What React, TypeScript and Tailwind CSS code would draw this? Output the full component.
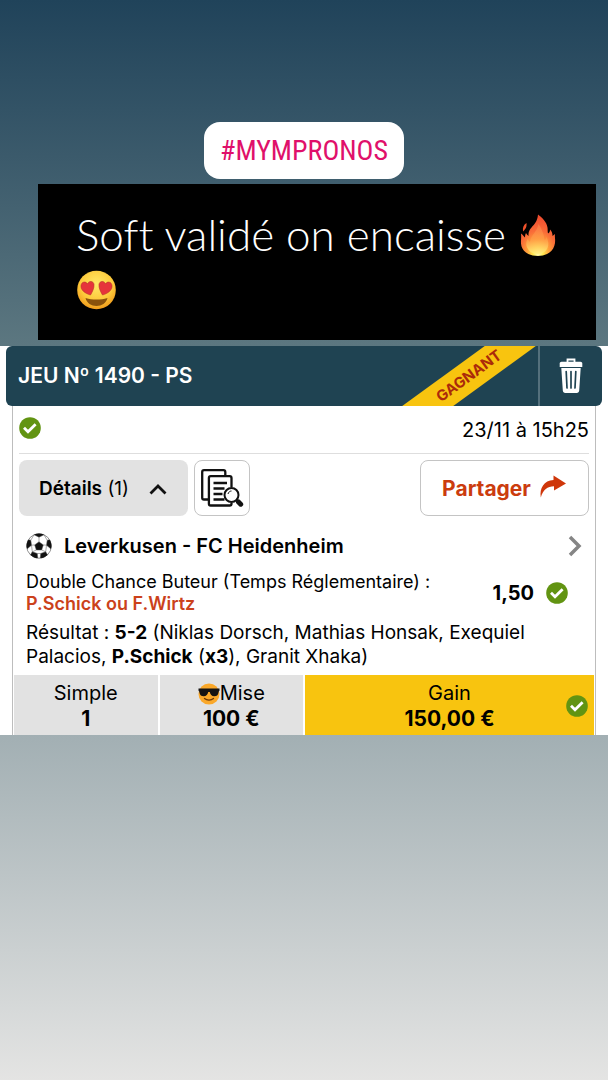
import React from 'react';
import clsx from 'clsx';

const CheckBadge = ({ className }: { className?: string }) => (
  <svg viewBox="0 0 22 22" className={clsx('h-[22px] w-[22px] shrink-0', className)} aria-hidden="true">
    <circle cx="11" cy="11" r="10.8" fill="#629412" />
    <path d="M5 10.800l4 4 7.600-7.600" fill="none" stroke="#fff" strokeWidth="2.800" />
  </svg>
);

const Fire = () => (
  <svg viewBox="0 0 36 44" className="ml-0.5 inline-block h-11 w-9 align-[-6px]" aria-hidden="true">
    <defs>
      <radialGradient id="flame" cx="0.5" cy="0.93" r="0.9">
        <stop offset="0" stopColor="#fffbc4" />
        <stop offset="0.16" stopColor="#ffe94f" />
        <stop offset="0.36" stopColor="#ffa03a" />
        <stop offset="0.6" stopColor="#f96c38" />
        <stop offset="1" stopColor="#ee4a2e" />
      </radialGradient>
      <linearGradient id="flameCore" x1="0" y1="0" x2="0" y2="1">
        <stop offset="0" stopColor="#ff8a50" stopOpacity="0.5" />
        <stop offset="0.5" stopColor="#ff9d48" stopOpacity="0.7" />
        <stop offset="1" stopColor="#fff07a" stopOpacity="0.9" />
      </linearGradient>
    </defs>
    <path
      d="M18 1.500c4 3 9 8 9.500 13 .3 2 0 4 .5 6 1.500-.8 2-2 2-4 2 2 2.500 4 2.500 6.500l2.500-2c-.5 3 .5 5 0 9C34 38 27 43 18 43 8 43 1.500 38 1 30.500.8 28 1.500 24 1 20.500c2 1 2.500 3 4 4 0-2 .3-3 1-4.500 1 1.500 1.300 2 2.500 3 0-4 .5-5.500 3-8.500 2.500-3 6-6 6.500-13z"
      fill="url(#flame)"
    />
    <path d="M6.500 10c-3 2-4 4.500-3.500 8.500 2-2 4-4 3.500-8.500z" fill="#f0522b" />
    <path
      d="M18.500 11c3 4 5 9 6 16 1-.5 1.500-1.500 2-3 2 4 2.500 8 1 11-2 4-5.500 6-9.500 6-5.500 0-10-3-11.500-8-.6-2.500 0-5 1-7 1 1 1.500 2 2.500 3 1-7 7-10 8.500-18z"
      fill="url(#flameCore)"
    />
  </svg>
);

const HeartEyes = () => (
  <svg viewBox="0 0 40 40" className="h-10 w-10" aria-hidden="true">
    <defs>
      <radialGradient id="face" cx="0.5" cy="0.35" r="0.65">
        <stop offset="0" stopColor="#ffe968" />
        <stop offset="0.65" stopColor="#fdc93a" />
        <stop offset="1" stopColor="#f09a1c" />
      </radialGradient>
    </defs>
    <circle cx="20.500" cy="20" r="19.300" fill="url(#face)" />
    <path d="M14.500 25C9 23.500 4.500 20 5 15.500c.5-4 5-4.500 6.500-1.500 1-3.500 6-3.500 6.500.5.300 3.500-1.500 7-3.500 10.500z" fill="#e6333b" stroke="#b83428" strokeWidth="0.600" />
    <path d="M26.500 25c5.500-1.500 10-5 9.500-9.500-.5-4-5-4.500-6.500-1.500-1-3.500-6-3.500-6.500.5-.3 3.500 1.500 7 3.500 10.500z" fill="#e6333b" stroke="#b83428" strokeWidth="0.600" />
    <path d="M9.500 28c7 2 15 2 22 0-1 5-6 8-11 8s-10-3-11-8z" fill="#8a520c" />
  </svg>
);

const CoolFace = () => (
  <svg viewBox="0 0 22 22" className="h-[22px] w-[22px]" aria-hidden="true">
    <circle cx="11" cy="11" r="10.500" fill="#faa82a" />
    <path d="M.5 5.500h21v2.300c-.7.300-.8.800-1 2-.4 2.400-1.800 3.500-4.200 3.500-2.700 0-4-1.600-4.500-4.200h-1.600c-.5 2.600-1.800 4.200-4.500 4.200-2.400 0-3.800-1.100-4.200-3.500-.2-1.200-.3-1.700-1-2z" fill="#151312" />
    <path d="M6.500 15.500c2.500 2.200 6.500 2.200 9 0" fill="none" stroke="#6f3906" strokeWidth="1.300" strokeLinecap="round" />
  </svg>
);

const Trash = () => (
  <svg viewBox="0 0 24 36" className="h-9 w-6" aria-hidden="true">
    <path d="M8.500 4V1.500h7V4" fill="none" stroke="#fff" strokeWidth="1.800" />
    <path d="M2.500 3.800h19c1 0 1.800.8 1.800 1.800V9H.7V5.600c0-1 .8-1.800 1.800-1.800z" fill="#fff" />
    <path d="M2.300 10h19.400l-1.500 22.500c-.1 1.500-1 2.500-2.500 2.500H6.300c-1.500 0-2.400-1-2.500-2.500z" fill="#fff" />
    <path d="M7.200 13.500l.8 16.500M12 13.500V30M16.800 13.500L16 30" stroke="#1f4352" strokeWidth="1.700" strokeLinecap="round" />
  </svg>
);

const DocSearch = () => (
  <svg viewBox="0 0 44 40" className="h-10 w-11" fill="none" stroke="#111" strokeWidth="2.300" aria-hidden="true">
    <path d="M8 31.500H4c-1.200 0-1.800-.6-1.800-1.800V4c0-1.200.6-1.800 1.800-1.800h19.500c1.200 0 1.800.6 1.800 1.800v3.500" />
    <path d="M31.500 19v-9c0-1.200-.6-1.800-1.800-1.800h-19c-1.200 0-1.800.6-1.800 1.800v25.700c0 1.200.6 1.800 1.800 1.800h19c1.200 0 1.800-.6 1.800-1.800V35" />
    <path d="M13.500 15h13.500M13.500 20.500h11M13.500 26h9M13.500 31.500h11" />
    <circle cx="31.500" cy="27" r="7" fill="#fff" strokeWidth="2" />
    <path d="M28 26c.5-2 2-3 3.500-3" strokeWidth="1" />
    <path d="M36.500 32l2 2" />
    <path d="M38.500 34l2.200 2.200" strokeWidth="5" strokeLinecap="round" />
  </svg>
);

const Ball = () => (
  <svg viewBox="0 0 26 26" className="h-[26px] w-[26px]" aria-hidden="true">
    <defs>
      <clipPath id="ballEdge">
        <circle cx="13" cy="13" r="12.500" />
      </clipPath>
    </defs>
    <circle cx="13" cy="13" r="12.300" fill="#fff" stroke="#444" strokeWidth="0.600" />
    <g clipPath="url(#ballEdge)" fill="#111" stroke="#555" strokeWidth="0.500">
      <path d="M13 8.800l4.300 3.100-1.600 5.100h-5.400l-1.600-5.100z" />
      <path d="M8 1.800L13 4.200l5-2.400L16-1h-6z" />
      <path d="M25.500 6.500l-4.300.7-.7 5 4.500 3.800 2-4z" />
      <path d="M.5 6.500l4.300.7.700 5L1 16l-2-4z" />
      <path d="M22 22.500l-2.300-3.700-5 1.700-.5 4.500 4 1z" />
      <path d="M4 22.500l2.300-3.700 5 1.700.5 4.500-4 1z" />
      <path d="M13 4.200v4.600M17.300 11.900l3.200.3M15.700 17l4 1.800M10.300 17l-4 1.800M8.700 11.900l-3.200.3M18 1.800l3.200 5.400M8 1.800L4.800 7.200M11.300 20.500h3.400M20.500 12.200l-.8 6.600M5.500 12.200l.8 6.600" fill="none" />
    </g>
  </svg>
);

export default function App() {
  return (
    <main className="flex min-h-screen flex-col bg-linear-to-b from-[#20435a] from-0% via-[#5c7780] via-32% to-[#e4e4e3] to-100% pt-[122px] font-['Inter',sans-serif] text-black">
      <div className="self-center rounded-2xl bg-white px-4 py-2 font-['Liberation_Sans_Narrow','Roboto_Condensed','Roboto',sans-serif] text-[28px] leading-[41px] text-[#e0106a]">
        #MYMPRONOS
      </div>

      <div className="mt-[5px] mr-3 ml-[38px] bg-black px-[38px] pt-[23px] pb-[23px] font-['Lato',sans-serif] text-[44px] leading-[55px] font-light text-white [font-variant-ligatures:none]">
        <p className="whitespace-nowrap">
          Soft validé on encaisse <Fire />
        </p>
        <div className="flex h-[55px] items-center">
          <HeartEyes />
        </div>
      </div>

      <article className="mt-1.5 bg-white px-1.5">
        <header className="relative flex h-[60px] items-center overflow-hidden rounded-md bg-[#1f4352] pl-3 text-white">
          <h1 className="flex-1 text-[21px] font-semibold">JEU Nº 1490 - PS</h1>
          <span className="absolute right-[53px] flex h-[30px] w-40 -rotate-36 items-center justify-center bg-[#f8c40f] text-[15px] leading-4 font-bold text-[#ab2a0a]">
            GAGNANT
          </span>
          <button type="button" aria-label="Supprimer" className="flex h-full w-16 items-center justify-center border-l-2 border-[#54707c]">
            <Trash />
          </button>
        </header>

        <div className="mx-1.5 border-x border-[#bdbdbd] px-px">
          <div className="mx-[5px] flex h-12 items-center justify-between border-b border-[#dedede] text-xl">
            <CheckBadge className="-mt-1" />
            <time>23/11 à 15h25</time>
          </div>

          <div className="mx-[5px] mt-1.5 flex h-14 gap-1.5">
            <button type="button" className="flex w-[169px] items-center justify-between rounded-lg bg-[#e2e2e2] px-5 pt-0.5 text-[19px]">
              <span>
                <span className="font-semibold">Détails</span> (1)
              </span>
              <svg viewBox="0 0 20 14" className="h-3.5 w-5" aria-hidden="true">
                <path d="M2.500 11.500L10 4l7.500 7.500" fill="none" stroke="#111" strokeWidth="2.800" />
              </svg>
            </button>
            <button type="button" aria-label="Voir le ticket" className="flex w-14 items-center justify-center rounded-lg border border-[#c4c4c4]">
              <DocSearch />
            </button>
            <button type="button" className="ml-auto flex w-[169px] items-center justify-center gap-2 rounded-lg border border-[#c4c4c4] pt-0.5 text-[21px] font-bold text-[#cb3c0e]">
              Partager
              <svg viewBox="0 0 28 24" className="mb-1 h-6 w-7" aria-hidden="true">
                <path d="M14.500 0.500L27 8.500l-12 7v-4.300C8.500 11.200 4 14.500 1.800 22.500.3 13 5 5.500 14.500 5z" fill="#cf360a" />
              </svg>
            </button>
          </div>

          <section className="px-3">
            <a href="#match" className="flex h-[55px] items-center pt-1">
              <Ball />
              <h2 className="ml-3 flex-1 text-xl font-semibold">Leverkusen - FC Heidenheim</h2>
              <svg viewBox="0 0 14 22" className="h-[22px] w-3.5" aria-hidden="true">
                <path d="M2 2l9 9-9 9" fill="none" stroke="#858585" strokeWidth="3.500" />
              </svg>
            </a>
            <div className="flex items-center text-lg leading-[22px]">
              <p className="flex-1">
                Double Chance Buteur (Temps Réglementaire) :
                <br />
                <span className="font-semibold text-[#cb421b]">P.Schick ou F.Wirtz</span>
              </p>
              <b className="text-xl">1,50</b>
              <CheckBadge className="mr-3.5 ml-3" />
            </div>
            <p className="pt-1.5 pb-1.5 text-[19px] leading-6">
              Résultat : <b>5-2</b> (Niklas Dorsch, Mathias Honsak, Exequiel
              <br />
              Palacios, <b>P.Schick</b> (<b>x3</b>), Granit Xhaka)
            </p>
          </section>

          <dl className="grid grid-cols-4 gap-0.5 text-center text-xl leading-[25px]">
            <div className="bg-[#e2e2e2] pt-1.5 pb-1">
              <dt>Simple</dt>
              <dd className="text-[21px] leading-[25px] font-bold">1</dd>
            </div>
            <div className="bg-[#e2e2e2] pt-1.5 pb-1">
              <dt className="flex items-center justify-center">
                <CoolFace />
                Mise
              </dt>
              <dd className="text-[21px] leading-[25px] font-bold">100 €</dd>
            </div>
            <div className="relative col-span-2 bg-[#f8c40f] pt-1.5 pb-1">
              <dt>Gain</dt>
              <dd className="text-[21px] leading-[25px] font-bold">150,00 €</dd>
              <CheckBadge className="absolute top-5 right-1.5" />
            </div>
          </dl>
        </div>
      </article>
    </main>
  );
}
